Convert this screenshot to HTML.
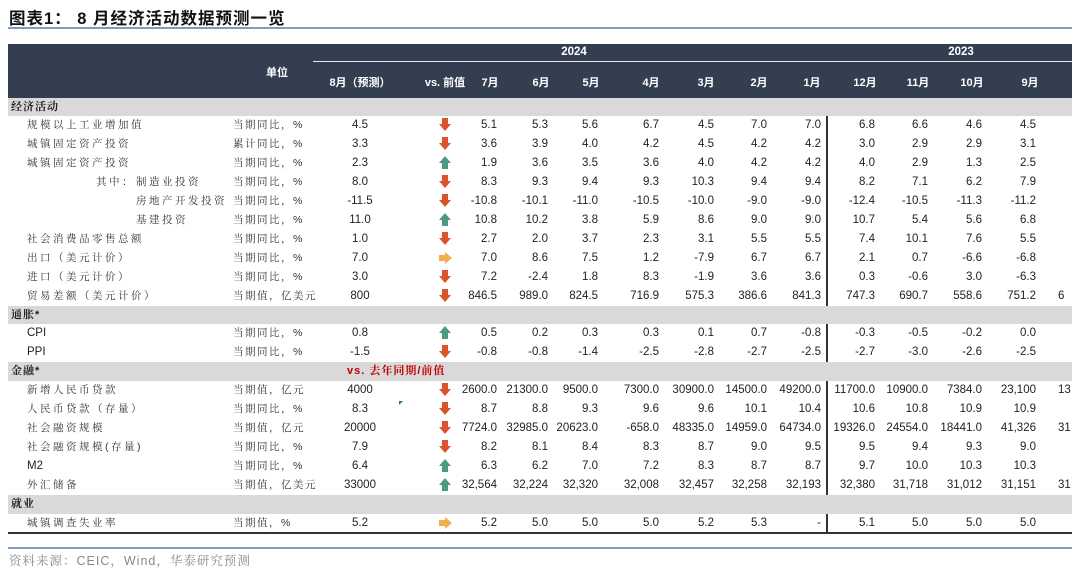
<!DOCTYPE html>
<html><head><meta charset="utf-8"><style>
*{margin:0;padding:0;box-sizing:border-box}
body{width:1080px;height:577px;background:#fff;position:relative;overflow:hidden;font-family:"Liberation Sans","Noto Sans CJK SC",sans-serif;color:#222}
.t{position:absolute;left:9px;top:5px;font-size:16.5px;font-weight:bold;color:#111;font-family:"Liberation Sans","Noto Sans CJK SC",sans-serif;letter-spacing:1px}
.bl{position:absolute;left:8px;width:1064px;height:2px;background:#7f9cc0}
.hd{position:absolute;left:8px;top:44px;width:1064px;height:54px;background:#333f50;color:#fff;font-weight:bold;font-size:11px}
.hd span{position:absolute;transform:translateX(-50%);white-space:nowrap}
.sec{position:absolute;left:8px;width:1064px;height:18px;background:#d9d9d9;font-size:11px;font-weight:bold;padding-left:3px;line-height:18px;color:#222;font-family:"Liberation Sans","Noto Serif CJK SC",serif;letter-spacing:1px}
.r{position:absolute;left:0;width:1072px;height:19px;font-size:11.5px;line-height:19px;overflow:hidden}
.r span{position:absolute;white-space:nowrap}
.l{font-family:"Liberation Sans","Noto Serif CJK SC",serif;font-size:10.5px;letter-spacing:2.5px;color:#333}
.u{left:233px;font-family:"Liberation Sans","Noto Serif CJK SC",serif;font-size:10.5px;letter-spacing:1.5px;color:#333}
.f{left:320px;width:80px;text-align:center}
.a{left:439px;top:2px}
.v{width:70px;text-align:right}
.v1{left:427px}.v2{left:478px}.v3{left:528px}.v4{left:589px}.v5{left:644px}.v6{left:697px}.v7{left:751px}.v8{left:805px}.v9{left:858px}.v10{left:912px}.v11{left:966px}.v12{left:1058px;text-align:left;width:20px}
.vl{position:absolute;left:826px;top:116px;width:2px;height:417px;background:#333}
</style></head><body>
<div class="t">图表1：&nbsp;8 月经济活动数据预测一览</div>
<div class="bl" style="top:27px"></div>
<div class="hd">
<div style="position:absolute;left:305px;top:17px;width:759px;height:1px;background:#e8e8e8"></div>
<span style="left:566px;top:2px;font-size:11.5px">2024</span><span style="left:953px;top:2px;font-size:11.5px">2023</span>
<span style="left:269px;top:20px">单位</span>
<span style="left:352px;top:30px">8月（预测）</span>
<span style="left:437px;top:30px">vs. 前值</span>
<span style="left:482px;top:30px">7月</span><span style="left:533px;top:30px">6月</span><span style="left:583px;top:30px">5月</span><span style="left:643px;top:30px">4月</span><span style="left:698px;top:30px">3月</span><span style="left:751px;top:30px">2月</span><span style="left:804px;top:30px">1月</span><span style="left:857px;top:30px">12月</span><span style="left:910px;top:30px">11月</span><span style="left:964px;top:30px">10月</span><span style="left:1022px;top:30px">9月</span>
</div>
<div class="sec" style="top:98px">经济活动</div>
<div class="vl"></div>
<svg width="0" height="0" style="position:absolute"><defs>
<symbol id="d" viewBox="0 0 12 13"><path d="M3 0h6v6h3l-6 7-6-7h3z" fill="#d9532b"/></symbol>
<symbol id="up" viewBox="0 0 12 13"><path d="M3 13h6V7h3L6 0 0 7h3z" fill="#4e9a80"/></symbol>
<symbol id="rt" viewBox="0 0 13 12"><path d="M0 3h6V0l7 6-7 6V9H0z" fill="#f0b050"/></symbol>
</defs></svg>

<div class="r" style="top:116px"><span class="l" style="left:27px">规模以上工业增加值</span><span class="u">当期同比，%</span><span class="f">4.5</span><span class="a"><svg width="12" height="13"><use href="#d"/></svg></span><span class="v v1">5.1</span><span class="v v2">5.3</span><span class="v v3">5.6</span><span class="v v4">6.7</span><span class="v v5">4.5</span><span class="v v6">7.0</span><span class="v v7">7.0</span><span class="v v8">6.8</span><span class="v v9">6.6</span><span class="v v10">4.6</span><span class="v v11">4.5</span></div>
<div class="r" style="top:135px"><span class="l" style="left:27px">城镇固定资产投资</span><span class="u">累计同比，%</span><span class="f">3.3</span><span class="a"><svg width="12" height="13"><use href="#d"/></svg></span><span class="v v1">3.6</span><span class="v v2">3.9</span><span class="v v3">4.0</span><span class="v v4">4.2</span><span class="v v5">4.5</span><span class="v v6">4.2</span><span class="v v7">4.2</span><span class="v v8">3.0</span><span class="v v9">2.9</span><span class="v v10">2.9</span><span class="v v11">3.1</span></div>
<div class="r" style="top:154px"><span class="l" style="left:27px">城镇固定资产投资</span><span class="u">当期同比，%</span><span class="f">2.3</span><span class="a"><svg width="12" height="13"><use href="#up"/></svg></span><span class="v v1">1.9</span><span class="v v2">3.6</span><span class="v v3">3.5</span><span class="v v4">3.6</span><span class="v v5">4.0</span><span class="v v6">4.2</span><span class="v v7">4.2</span><span class="v v8">4.0</span><span class="v v9">2.9</span><span class="v v10">1.3</span><span class="v v11">2.5</span></div>
<div class="r" style="top:173px"><span class="l" style="left:96px">其中：</span><span class="l" style="left:136px">制造业投资</span><span class="u">当期同比，%</span><span class="f">8.0</span><span class="a"><svg width="12" height="13"><use href="#d"/></svg></span><span class="v v1">8.3</span><span class="v v2">9.3</span><span class="v v3">9.4</span><span class="v v4">9.3</span><span class="v v5">10.3</span><span class="v v6">9.4</span><span class="v v7">9.4</span><span class="v v8">8.2</span><span class="v v9">7.1</span><span class="v v10">6.2</span><span class="v v11">7.9</span></div>
<div class="r" style="top:192px"><span class="l" style="left:136px">房地产开发投资</span><span class="u">当期同比，%</span><span class="f">-11.5</span><span class="a"><svg width="12" height="13"><use href="#d"/></svg></span><span class="v v1">-10.8</span><span class="v v2">-10.1</span><span class="v v3">-11.0</span><span class="v v4">-10.5</span><span class="v v5">-10.0</span><span class="v v6">-9.0</span><span class="v v7">-9.0</span><span class="v v8">-12.4</span><span class="v v9">-10.5</span><span class="v v10">-11.3</span><span class="v v11">-11.2</span></div>
<div class="r" style="top:211px"><span class="l" style="left:136px">基建投资</span><span class="u">当期同比，%</span><span class="f">11.0</span><span class="a"><svg width="12" height="13"><use href="#up"/></svg></span><span class="v v1">10.8</span><span class="v v2">10.2</span><span class="v v3">3.8</span><span class="v v4">5.9</span><span class="v v5">8.6</span><span class="v v6">9.0</span><span class="v v7">9.0</span><span class="v v8">10.7</span><span class="v v9">5.4</span><span class="v v10">5.6</span><span class="v v11">6.8</span></div>
<div class="r" style="top:230px"><span class="l" style="left:27px">社会消费品零售总额</span><span class="u">当期同比，%</span><span class="f">1.0</span><span class="a"><svg width="12" height="13"><use href="#d"/></svg></span><span class="v v1">2.7</span><span class="v v2">2.0</span><span class="v v3">3.7</span><span class="v v4">2.3</span><span class="v v5">3.1</span><span class="v v6">5.5</span><span class="v v7">5.5</span><span class="v v8">7.4</span><span class="v v9">10.1</span><span class="v v10">7.6</span><span class="v v11">5.5</span></div>
<div class="r" style="top:249px"><span class="l" style="left:27px">出口（美元计价）</span><span class="u">当期同比，%</span><span class="f">7.0</span><span class="a" style="top:3px"><svg width="13" height="12"><use href="#rt"/></svg></span><span class="v v1">7.0</span><span class="v v2">8.6</span><span class="v v3">7.5</span><span class="v v4">1.2</span><span class="v v5">-7.9</span><span class="v v6">6.7</span><span class="v v7">6.7</span><span class="v v8">2.1</span><span class="v v9">0.7</span><span class="v v10">-6.6</span><span class="v v11">-6.8</span></div>
<div class="r" style="top:268px"><span class="l" style="left:27px">进口（美元计价）</span><span class="u">当期同比，%</span><span class="f">3.0</span><span class="a"><svg width="12" height="13"><use href="#d"/></svg></span><span class="v v1">7.2</span><span class="v v2">-2.4</span><span class="v v3">1.8</span><span class="v v4">8.3</span><span class="v v5">-1.9</span><span class="v v6">3.6</span><span class="v v7">3.6</span><span class="v v8">0.3</span><span class="v v9">-0.6</span><span class="v v10">3.0</span><span class="v v11">-6.3</span></div>
<div class="r" style="top:287px"><span class="l" style="left:27px">贸易差额（美元计价）</span><span class="u">当期值，亿美元</span><span class="f">800</span><span class="a"><svg width="12" height="13"><use href="#d"/></svg></span><span class="v v1">846.5</span><span class="v v2">989.0</span><span class="v v3">824.5</span><span class="v v4">716.9</span><span class="v v5">575.3</span><span class="v v6">386.6</span><span class="v v7">841.3</span><span class="v v8">747.3</span><span class="v v9">690.7</span><span class="v v10">558.6</span><span class="v v11">751.2</span><span class="v v12">6</span></div>

<div class="sec" style="top:306px">通胀*</div>
<div class="r" style="top:324px"><span style="left:27px">CPI</span><span class="u">当期同比，%</span><span class="f">0.8</span><span class="a"><svg width="12" height="13"><use href="#up"/></svg></span><span class="v v1">0.5</span><span class="v v2">0.2</span><span class="v v3">0.3</span><span class="v v4">0.3</span><span class="v v5">0.1</span><span class="v v6">0.7</span><span class="v v7">-0.8</span><span class="v v8">-0.3</span><span class="v v9">-0.5</span><span class="v v10">-0.2</span><span class="v v11">0.0</span></div>
<div class="r" style="top:343px"><span style="left:27px">PPI</span><span class="u">当期同比，%</span><span class="f">-1.5</span><span class="a"><svg width="12" height="13"><use href="#d"/></svg></span><span class="v v1">-0.8</span><span class="v v2">-0.8</span><span class="v v3">-1.4</span><span class="v v4">-2.5</span><span class="v v5">-2.8</span><span class="v v6">-2.7</span><span class="v v7">-2.5</span><span class="v v8">-2.7</span><span class="v v9">-3.0</span><span class="v v10">-2.6</span><span class="v v11">-2.5</span></div>

<div class="sec" style="top:362px;height:19px">金融*<span style="position:absolute;left:339px;top:0;color:#c00000">vs. 去年同期/前值</span></div>
<div class="r" style="top:381px"><span class="l" style="left:27px">新增人民币贷款</span><span class="u">当期值，亿元</span><span class="f">4000</span><span class="a"><svg width="12" height="13"><use href="#d"/></svg></span><span class="v v1">2600.0</span><span class="v v2">21300.0</span><span class="v v3">9500.0</span><span class="v v4">7300.0</span><span class="v v5">30900.0</span><span class="v v6">14500.0</span><span class="v v7">49200.0</span><span class="v v8">11700.0</span><span class="v v9">10900.0</span><span class="v v10">7384.0</span><span class="v v11">23,100</span><span class="v v12">13</span></div>
<div class="r" style="top:400px"><span class="l" style="left:27px">人民币贷款（存量）</span><span class="u">当期同比，%</span><span class="f">8.3</span><span style="left:399px;top:1px;width:0;height:0;border-top:4px solid #1a8a1a;border-right:4px solid transparent"></span><span class="a"><svg width="12" height="13"><use href="#d"/></svg></span><span class="v v1">8.7</span><span class="v v2">8.8</span><span class="v v3">9.3</span><span class="v v4">9.6</span><span class="v v5">9.6</span><span class="v v6">10.1</span><span class="v v7">10.4</span><span class="v v8">10.6</span><span class="v v9">10.8</span><span class="v v10">10.9</span><span class="v v11">10.9</span></div>
<div class="r" style="top:419px"><span class="l" style="left:27px">社会融资规模</span><span class="u">当期值，亿元</span><span class="f">20000</span><span class="a"><svg width="12" height="13"><use href="#d"/></svg></span><span class="v v1">7724.0</span><span class="v v2">32985.0</span><span class="v v3">20623.0</span><span class="v v4">-658.0</span><span class="v v5">48335.0</span><span class="v v6">14959.0</span><span class="v v7">64734.0</span><span class="v v8">19326.0</span><span class="v v9">24554.0</span><span class="v v10">18441.0</span><span class="v v11">41,326</span><span class="v v12">31</span></div>
<div class="r" style="top:438px"><span class="l" style="left:27px">社会融资规模(存量)</span><span class="u">当期同比，%</span><span class="f">7.9</span><span class="a"><svg width="12" height="13"><use href="#d"/></svg></span><span class="v v1">8.2</span><span class="v v2">8.1</span><span class="v v3">8.4</span><span class="v v4">8.3</span><span class="v v5">8.7</span><span class="v v6">9.0</span><span class="v v7">9.5</span><span class="v v8">9.5</span><span class="v v9">9.4</span><span class="v v10">9.3</span><span class="v v11">9.0</span></div>
<div class="r" style="top:457px"><span style="left:27px">M2</span><span class="u">当期同比，%</span><span class="f">6.4</span><span class="a"><svg width="12" height="13"><use href="#up"/></svg></span><span class="v v1">6.3</span><span class="v v2">6.2</span><span class="v v3">7.0</span><span class="v v4">7.2</span><span class="v v5">8.3</span><span class="v v6">8.7</span><span class="v v7">8.7</span><span class="v v8">9.7</span><span class="v v9">10.0</span><span class="v v10">10.3</span><span class="v v11">10.3</span></div>
<div class="r" style="top:476px"><span class="l" style="left:27px">外汇储备</span><span class="u">当期值，亿美元</span><span class="f">33000</span><span class="a"><svg width="12" height="13"><use href="#up"/></svg></span><span class="v v1">32,564</span><span class="v v2">32,224</span><span class="v v3">32,320</span><span class="v v4">32,008</span><span class="v v5">32,457</span><span class="v v6">32,258</span><span class="v v7">32,193</span><span class="v v8">32,380</span><span class="v v9">31,718</span><span class="v v10">31,012</span><span class="v v11">31,151</span><span class="v v12">31</span></div>

<div class="sec" style="top:495px;height:19px">就业</div>
<div class="r" style="top:514px"><span class="l" style="left:27px">城镇调查失业率</span><span class="u">当期值，%</span><span class="f">5.2</span><span class="a" style="top:3px"><svg width="13" height="12"><use href="#rt"/></svg></span><span class="v v1">5.2</span><span class="v v2">5.0</span><span class="v v3">5.0</span><span class="v v4">5.0</span><span class="v v5">5.2</span><span class="v v6">5.3</span><span class="v v7">-</span><span class="v v8">5.1</span><span class="v v9">5.0</span><span class="v v10">5.0</span><span class="v v11">5.0</span></div>
<div style="position:absolute;left:8px;top:532px;width:1064px;height:2px;background:#333"></div>
<div class="bl" style="top:547px;height:1.5px"></div>
<div style="position:absolute;left:9px;top:551px;font-size:12.5px;color:#888;font-family:'Liberation Sans','Noto Serif CJK SC',serif;letter-spacing:1px">资料来源：CEIC，Wind，华泰研究预测</div>
</body></html>
